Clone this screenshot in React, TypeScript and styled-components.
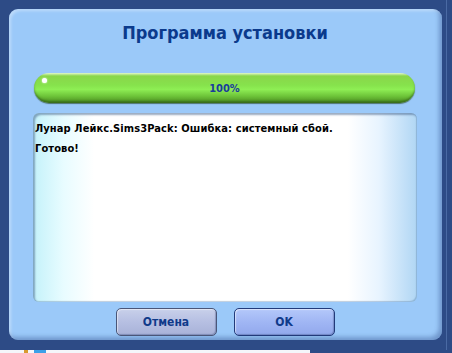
import React from "react";
import styled, { createGlobalStyle } from "styled-components";

const Global = createGlobalStyle`
  html, body { margin: 0; padding: 0; background: #2d4b86; }
  body { width: 452px; height: 353px; overflow: hidden; font-family: "DejaVu Sans Condensed", "DejaVu Sans", Verdana, sans-serif; }
`;

const Screen = styled.div`
  width: 452px;
  height: 353px;
  display: flex;
  flex-direction: column;
  background: #2d4b86;
`;

const Frame = styled.div`
  width: 447px;
  height: 350px;
  box-sizing: border-box;
  background: #2d4b86;
  border-right: 1px solid #4a6aa4;
  padding: 9px 4px 10px 9px;
  display: flex;
`;

const Panel = styled.div`
  flex: 1;
  border-radius: 9px;
  background: #9bc9f9;
  box-shadow: inset -3px -3px 4px rgba(60, 90, 150, 0.45), inset 2px 2px 3px rgba(255, 255, 255, 0.35);
  display: flex;
  flex-direction: column;
  padding: 0 25px 4px 24px;
`;

const Title = styled.div`
  height: 47px;
  display: flex;
  align-items: center;
  justify-content: center;
  font-weight: bold;
  font-size: 18px;
  color: #0b3a8c;
`;

const BarWrap = styled.div`
  margin-top: 17px;
  margin-right: 2px;
  margin-left: 1px;
  height: 30px;
  border-radius: 15px;
  position: relative;
  background: linear-gradient(
    to bottom,
    #e4f8cc 0%,
    #8ad64a 10%,
    #86e24c 40%,
    #8eee54 55%,
    #6cc238 78%,
    #4a8a20 100%
  );
  box-shadow: 0 1px 1px rgba(30, 60, 20, 0.6), inset 0 -2px 2px rgba(40, 80, 20, 0.5);
  display: flex;
  align-items: center;
  justify-content: center;
  font-weight: bold;
  font-size: 11px;
  color: #1a3c9a;
`;

const Shine = styled.span`
  position: absolute;
  left: 8px;
  top: 5px;
  width: 5px;
  height: 5px;
  border-radius: 50%;
  background: #ffffff;
  box-shadow: 0 0 2px #fff;
`;

const LogBox = styled.div`
  margin-top: 10px;
  height: 189px;
  border-radius: 6px;
  box-sizing: border-box;
  padding: 6px 2px;
  background: linear-gradient(
    to right,
    #c4f2fa 0%,
    #e8fcff 8%,
    #ffffff 16%,
    #ffffff 82%,
    #e8f4ff 90%,
    #b0d6f4 100%
  );
  box-shadow: inset 2px 2px 2px rgba(70, 100, 140, 0.55), inset -1px -1px 1px rgba(90, 130, 170, 0.4);
`;

const LogLine = styled.div`
  font-weight: bold;
  font-size: 11px;
  letter-spacing: 0.1px;
  line-height: 20px;
  height: 20px;
  color: #000000;
  white-space: nowrap;
`;

const Buttons = styled.div`
  margin-top: 6px;
  display: flex;
  justify-content: center;
  gap: 17px;
`;

const Btn = styled.div<{ $primary?: boolean }>`
  width: 101px;
  height: 28px;
  box-sizing: border-box;
  border-radius: 5px;
  border: 1px solid ${(p) => (p.$primary ? "#223a7a" : "#4a5678")};
  background: ${(p) =>
    p.$primary
      ? "linear-gradient(to bottom, #b4c8fa 0%, #a0b6f4 50%, #92a8ec 100%)"
      : "linear-gradient(to bottom, #c8d0ea 0%, #b6bfe2 50%, #a8b2d8 100%)"};
  box-shadow: inset 1px 1px 1px rgba(255, 255, 255, 0.5), inset -1px -1px 1px rgba(50, 70, 120, 0.35);
  display: flex;
  align-items: center;
  justify-content: center;
  font-weight: bold;
  font-size: 12px;
  color: #103a8a;
`;

const Strip = styled.div`
  flex: 1;
  display: flex;
`;

const StripLight = styled.div`
  width: 286px;
  background: #f4f6fa;
  display: flex;
  align-items: stretch;
  padding-left: 24px;
  gap: 6px;
`;

const StripDot = styled.span<{ $c: string; $w: number }>`
  width: ${(p) => p.$w}px;
  background: ${(p) => p.$c};
`;

const StripDark = styled.div`
  flex: 1;
  background: #2d4b86;
`;

export default function App() {
  return (
    <>
      <Global />
      <Screen>
        <Frame>
          <Panel>
            <Title>Программа установки</Title>
            <BarWrap>
              <Shine />
              100%
            </BarWrap>
            <LogBox>
              <LogLine>Лунар Лейкс.Sims3Pack: Ошибка: системный сбой.</LogLine>
              <LogLine>Готово!</LogLine>
            </LogBox>
            <Buttons>
              <Btn>Отмена</Btn>
              <Btn $primary>OK</Btn>
            </Buttons>
          </Panel>
        </Frame>
        <Strip>
          <StripLight>
            <StripDot $c="#d89a30" $w={4} />
            <StripDot $c="#3aa0e8" $w={12} />
          </StripLight>
          <StripDark />
        </Strip>
      </Screen>
    </>
  );
}
